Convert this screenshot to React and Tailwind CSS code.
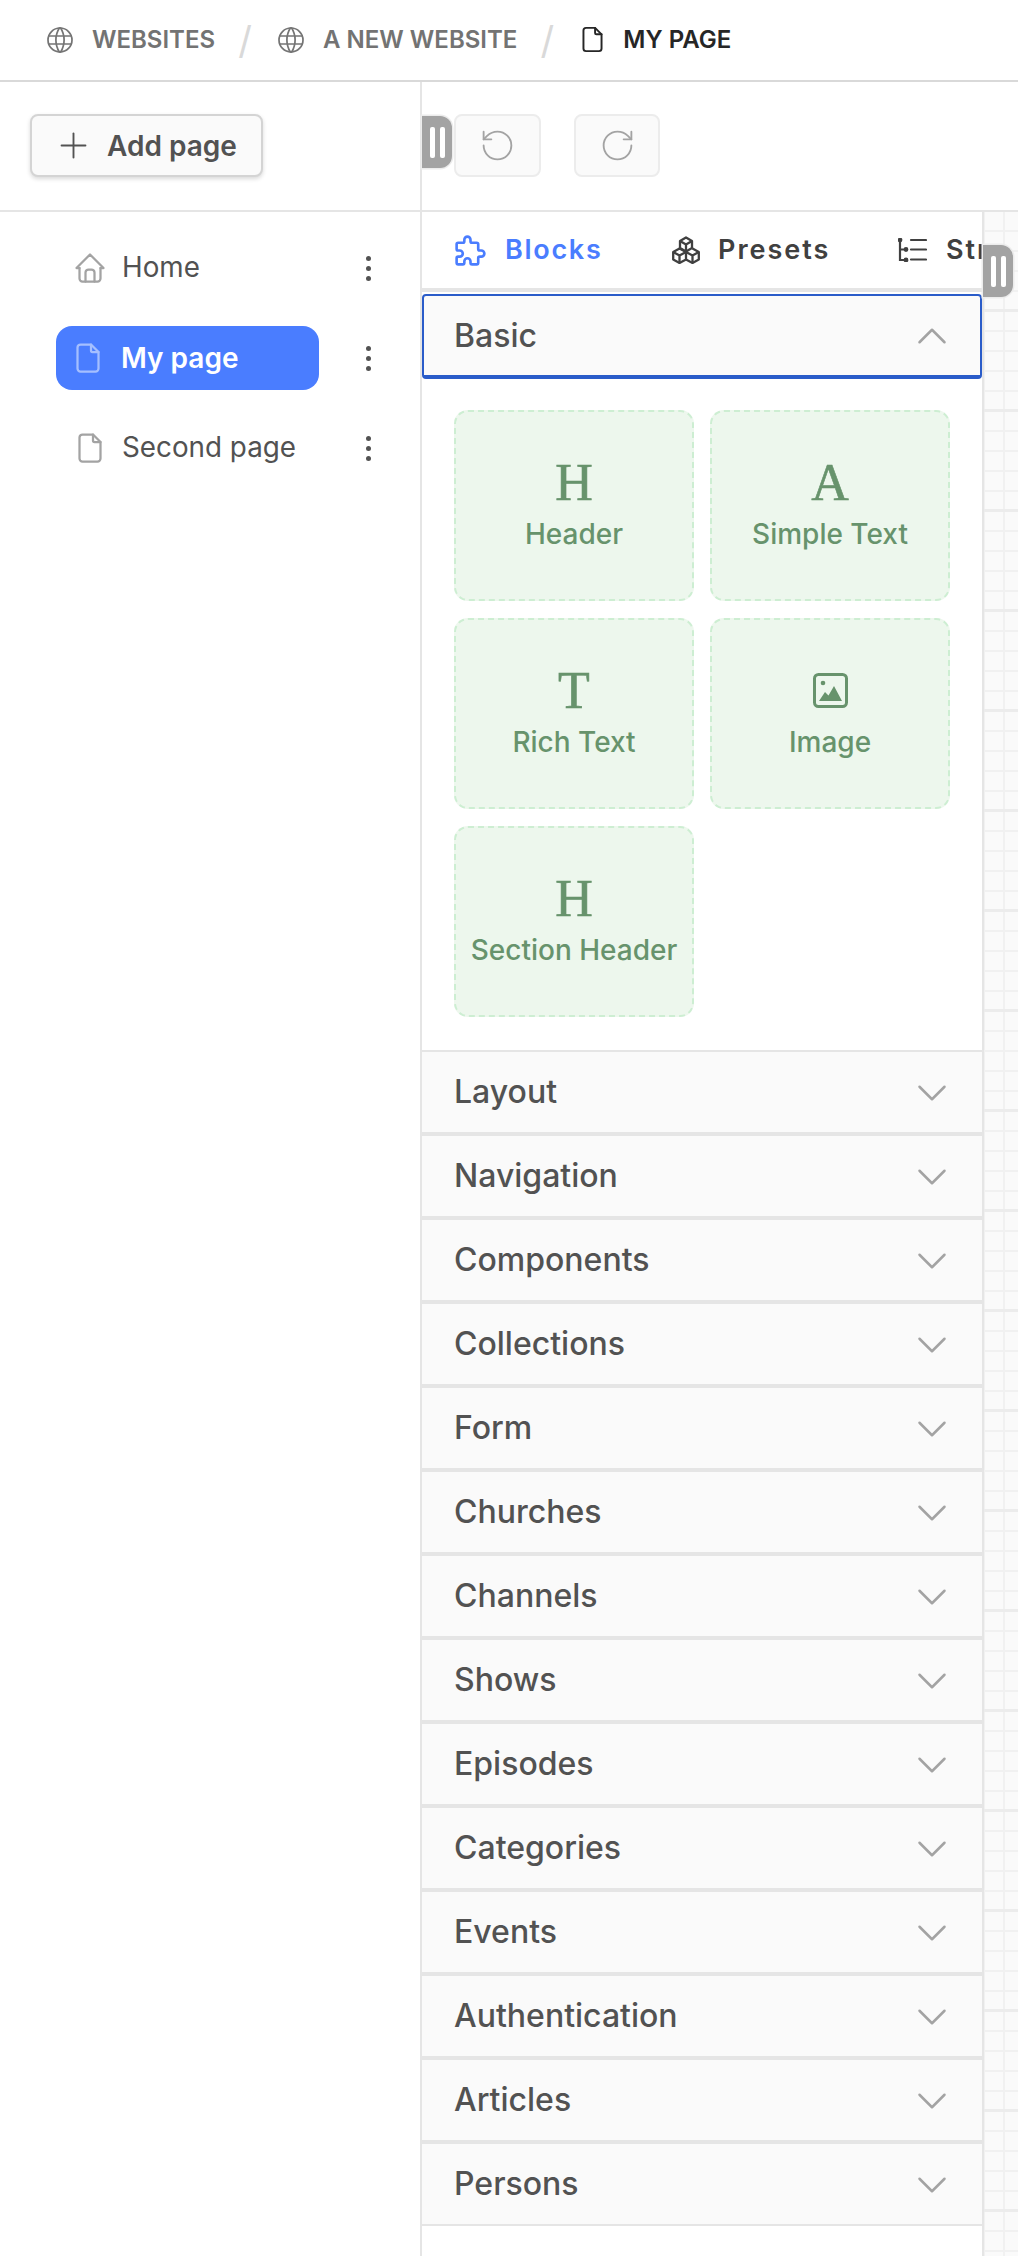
import React from "react";
import { Plus, RotateCcw, RotateCw, ChevronDown, ChevronUp } from "lucide-react";

const Ico = ({ size, color, sw, children }) => (
  <svg width={size} height={size} viewBox="0 0 24 24" fill="none" stroke={color} strokeWidth={sw} strokeLinecap="round" strokeLinejoin="round" className="shrink-0">
    {children}
  </svg>
);
const Globe = () => (
  <Ico size={32} color="#757575" sw={1.3}>
    <circle cx="12" cy="12" r="9" />
    <path d="M3.600 9h16.800M3.600 15h16.800M11.500 3a17 17 0 0 0 0 18M12.500 3a17 17 0 0 1 0 18" />
  </Ico>
);
const FileIco = ({ color, size = 36, sw = 1.5 }) => (
  <Ico size={size} color={color} sw={sw}>
    <path d="M14 3v4a1 1 0 0 0 1 1h4" />
    <path d="M17 21h-10a2 2 0 0 1-2-2v-14a2 2 0 0 1 2-2h7l5 5v11a2 2 0 0 1-2 2" />
  </Ico>
);
const Home = () => (
  <Ico size={36} color="#a3a3a3" sw={1.5}>
    <path d="M5 12h-2l9-9l9 9h-2" />
    <path d="M5 12v7a2 2 0 0 0 2 2h10a2 2 0 0 0 2-2v-7" />
    <path d="M9 21v-6a2 2 0 0 1 2-2h2a2 2 0 0 1 2 2v6" />
  </Ico>
);
const Kebab = () => (
  <div className="flex flex-col items-center gap-[5px] w-[6px]">
    <span className="w-[5px] h-[5px] rounded-full bg-[#525252]" />
    <span className="w-[5px] h-[5px] rounded-full bg-[#525252]" />
    <span className="w-[5px] h-[5px] rounded-full bg-[#525252]" />
  </div>
);
const Handle = () => (
  <div className="w-[30px] h-[52px] rounded-r-[12px] bg-[#a3a3a3] flex items-center justify-center gap-[5px] shadow-[0_0_0_1.500px_#ececec]">
    <span className="w-[5px] h-[31px] rounded-[2px] bg-white" />
    <span className="w-[5px] h-[31px] rounded-[2px] bg-white" />
  </div>
);
const Puzzle = () => (
  <Ico size={37} color="#4a7dff" sw={1.7}>
    <path d="M4 7h3a1 1 0 0 0 1-1v-1a2 2 0 0 1 4 0v1a1 1 0 0 0 1 1h3a1 1 0 0 1 1 1v3a1 1 0 0 0 1 1h1a2 2 0 0 1 0 4h-1a1 1 0 0 0-1 1v3a1 1 0 0 1-1 1h-3a1 1 0 0 1-1-1v-1a2 2 0 0 0-4 0v1a1 1 0 0 1-1 1h-3a1 1 0 0 1-1-1v-3a1 1 0 0 1 1-1h1a2 2 0 0 0 0-4h-1a1 1 0 0 1-1-1v-3a1 1 0 0 1 1-1" />
  </Ico>
);
const Cubes = () => (
  <svg width="28" height="28" viewBox="0 0 28 28" fill="none" stroke="#404040" strokeWidth="2.300" strokeLinejoin="round" className="shrink-0">
    <path d="M14 1.500l6 3.500v7l-6 3.500-6-3.500v-7z" />
    <path d="M8 5l6 3.500L20 5M14 8.500V15.500" />
    <path d="M7.500 12.500l6.500 3.500v7.500l-6.500 3.500L1.200 23.500V16z" />
    <path d="M1.200 16l6.300 3.500L14 16M7.500 19.500V27" />
    <path d="M20.500 12.500l6.300 3.500v7.500L20.500 27 14 23.500" />
    <path d="M14 16l6.500 3.500 6.300-3.500M20.500 19.500V27" />
  </svg>
);
const Tree = () => (
  <svg width="29" height="24" viewBox="0 0 29 24" fill="none" stroke="#404040" strokeWidth="2.200" strokeLinecap="round" className="shrink-0">
    <path d="M2 2v20h6M2 11.500h6" />
    <path d="M13 2h15M13 11.500h15M13 21.500h15" />
    <circle cx="2" cy="2" r="1.300" fill="#404040" />
    <circle cx="8" cy="11.500" r="1.300" fill="#404040" />
    <circle cx="8" cy="22" r="1.300" fill="#404040" />
  </svg>
);
const ImageIco = () => (
  <svg width="35" height="35" viewBox="0 0 35 35" className="shrink-0">
    <rect x="1.500" y="1.500" width="32" height="32" rx="4" fill="none" stroke="#67936c" strokeWidth="3" />
    <circle cx="10" cy="10" r="2.300" fill="#67936c" />
    <path d="M6 28l6-9 3.500 3.500L21 13l8 15z" fill="#67936c" />
  </svg>
);
const Card = ({ glyph, label }) => (
  <div className="h-[191px] rounded-[14px] border-2 border-dashed border-[#cdeed2] bg-[#edf7ed] flex flex-col items-center pt-[52px] text-[#67936c]">
    <div className="h-[37px] flex items-center justify-center">
      {typeof glyph === "string" ? (
        <span className="text-[52px] leading-[37px] font-['Liberation_Serif',serif] [-webkit-text-stroke:0.6px_#67936c]">{glyph}</span>
      ) : glyph}
    </div>
    <span className="mt-[15px] text-[28px] font-medium leading-[36px] whitespace-nowrap">{label}</span>
  </div>
);
const Row = ({ label }) => (
  <div className="h-[84px] border-y-2 border-[#e5e5e5] bg-[#fafafa] flex items-center justify-between pl-[32px] pr-[25px]">
    <span className="text-[32px] font-medium text-[#525252]">{label}</span>
    <span className="mt-[2px]"><ChevronDown size={50} strokeWidth={1.200} color="#a3a3a3" /></span>
  </div>
);
const rows = ["Layout","Navigation","Components","Collections","Form","Churches","Channels","Shows","Episodes","Categories","Events","Authentication","Articles","Persons"];

const Page = ({ active, icon, label }) => (
  <div className="flex items-center h-[64px] relative">
    {active ? (
      <div className="ml-[56px] w-[263px] h-[64px] rounded-[16px] bg-[#4a7dff] flex items-center pl-[14px] gap-[15px]">
        <FileIco color="#a5bfff" />
        <span className="text-[28px] font-semibold text-white">{label}</span>
      </div>
    ) : (
      <div className="ml-[72px] flex items-center gap-[14px]">
        {icon}
        <span className="text-[27.800px] text-[#525252]">{label}</span>
      </div>
    )}
    <div className="absolute left-[365px] top-[20px]"><Kebab /></div>
  </div>
);
const Slash = () => <span className="w-[16px] mx-[22px] text-center text-[#d9d9d9] text-[38px] leading-[40px] font-normal">/</span>;

export default function App() {
  return (
    <div className="w-[1018px] h-[2256px] overflow-hidden bg-white flex flex-col font-['Inter',sans-serif]">
      <div className="h-[82px] shrink-0 border-b-2 border-[#d9d9d9] flex items-center pl-[44px] pb-[1px] text-[24px] font-semibold whitespace-nowrap">
        <Globe />
        <span className="ml-[16px] text-[#737373]">WEBSITES</span>
        <Slash />
        <Globe />
        <span className="ml-[16px] text-[#737373]">A NEW WEBSITE</span>
        <Slash />
        <FileIco color="#262626" size={31} sw={1.5} />
        <span className="ml-[15px] text-[#262626]">MY PAGE</span>
      </div>
      <div className="flex flex-1 min-h-0">
        <aside className="w-[422px] shrink-0 border-r-2 border-[#e5e5e5]">
          <div className="h-[130px] border-b-2 border-[#e5e5e5] flex items-start pl-[30px] pt-[32px]">
            <div className="w-[233px] h-[63px] rounded-[8px] border-2 border-[#d4d4d4] bg-[#fafafa] shadow-[0_2px_4px_rgba(0,0,0,0.15)] flex items-center pl-[21px] gap-[13px]">
              <Plus size={41} strokeWidth={1.100} color="#525252" />
              <span className="text-[28px] font-semibold text-[#525252]">Add page</span>
            </div>
          </div>
          <div className="pt-[24px] flex flex-col gap-[26px]">
            <Page icon={<Home />} label="Home" />
            <Page active label="My page" />
            <Page icon={<FileIco color="#a3a3a3" />} label="Second page" />
          </div>
        </aside>
        <div className="flex-1 min-w-0 flex flex-col">
          <div className="h-[130px] shrink-0 border-b-2 border-[#e5e5e5] flex items-start pt-[32px] pl-[32px] gap-[33px] relative">
            <div className="absolute left-0 top-[34px]"><Handle /></div>
            <div className="w-[87px] h-[63px] rounded-[8px] border-2 border-[#ececec] bg-[#fafafa] flex items-center justify-center">
              <RotateCcw size={37} strokeWidth={1.200} color="#a3a3a3" />
            </div>
            <div className="w-[86px] h-[63px] rounded-[8px] border-2 border-[#ececec] bg-[#fafafa] flex items-center justify-center">
              <RotateCw size={37} strokeWidth={1.200} color="#a3a3a3" />
            </div>
          </div>
          <div className="flex flex-1 min-h-0">
            <div className="w-[562px] shrink-0 border-r-2 border-[#e5e5e5] relative">
              <div className="h-[80px] flex border-b-[4px] border-[#e5e5e5] overflow-hidden">
                <div className="w-[214px] shrink-0 h-[80px] border-b-[4px] border-[#2f61ea] flex items-center pl-[30px] gap-[16px]">
                  <Puzzle />
                  <span className="text-[27px] font-semibold tracking-[1.700px] text-[#4a7dff]">Blocks</span>
                </div>
                <div className="w-[262px] shrink-0 h-[76px] flex items-center pl-[36px] gap-[18px]">
                  <Cubes />
                  <span className="text-[27px] font-semibold tracking-[2px] text-[#404040]">Presets</span>
                </div>
                <div className="shrink-0 h-[76px] flex items-center gap-[19px]">
                  <Tree />
                  <span className="text-[27px] font-semibold tracking-[2px] text-[#404040]">Structure</span>
                </div>
              </div>
              <div className="mt-[2px] h-[85px] rounded-[4px] border-2 border-[#2a5cc9] border-b-[4px] bg-[#fafafa] flex items-center justify-between pl-[30px] pr-[23px]">
                <span className="text-[32px] font-medium text-[#525252]">Basic</span>
                <ChevronUp size={50} strokeWidth={1.200} color="#a3a3a3" />
              </div>
              <div className="pl-[32px] pt-[31px] pb-[33px] grid grid-cols-[240px_240px] gap-x-[16px] gap-y-[17px]">
                <Card glyph="H" label="Header" />
                <Card glyph="A" label="Simple Text" />
                <Card glyph="T" label="Rich Text" />
                <Card glyph={<ImageIco />} label="Image" />
                <Card glyph="H" label="Section Header" />
              </div>
              <div className="flex flex-col">
                {rows.map((r) => <Row key={r} label={r} />)}
              </div>
              <div className="absolute left-[561px] top-[33px]"><Handle /></div>
            </div>
            <div className="flex-1 bg-[#fafafa] bg-[linear-gradient(#ececec_3px,transparent_3px),linear-gradient(#f1f1f1_2px,transparent_2px),linear-gradient(90deg,#f1f1f1_2px,transparent_2px)] bg-[length:100%_100px,100%_20px,20px_100%] bg-[position:0_-3px,0_-2px,19px_0]" />
          </div>
        </div>
      </div>
    </div>
  );
}
